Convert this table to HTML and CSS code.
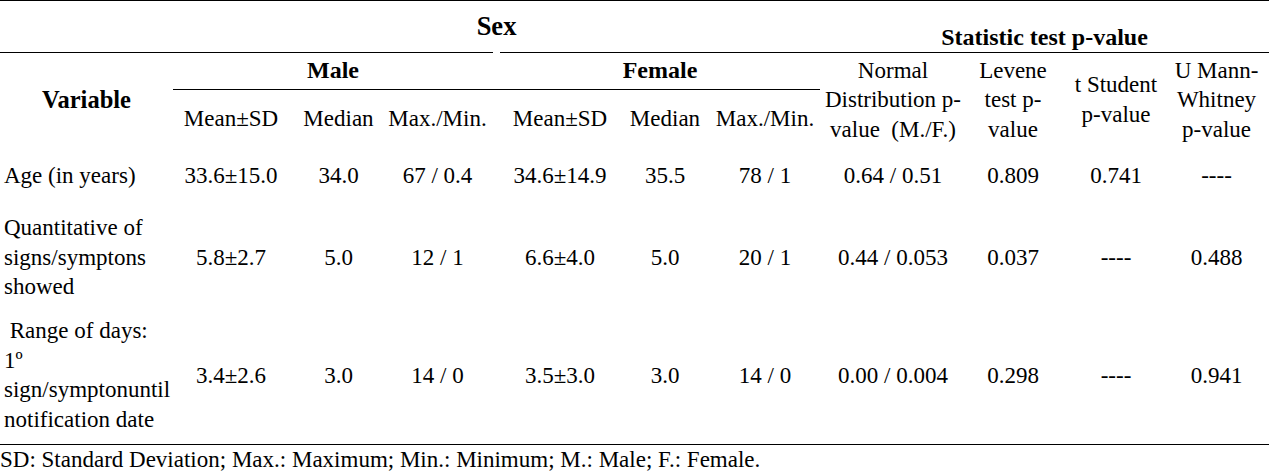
FILE: index.html
```html
<!DOCTYPE html>
<html lang="en">
<head>
<meta charset="utf-8">
<title>Sex statistics table</title>
<link rel="stylesheet" href="styles.css">
</head>
<body>
<table class="stats">
  <colgroup>
    <col class="c-var">
    <col class="c-m1"><col class="c-m2"><col class="c-m3">
    <col class="c-gap">
    <col class="c-f1"><col class="c-f2"><col class="c-f3">
    <col class="c-norm"><col class="c-lev"><col class="c-ts"><col class="c-um">
  </colgroup>
  <thead>
    <tr class="row-a">
      <th colspan="8" class="sex">Sex</th>
      <th colspan="4" class="stat">Statistic test p-value</th>
    </tr>
    <tr class="row-b">
      <th rowspan="2" class="variable">Variable</th>
      <th colspan="3" class="group ruled">Male</th>
      <th class="ruled"></th>
      <th colspan="3" class="group ruled">Female</th>
      <th rowspan="2" class="test">Normal<br>Distribution p-<br>value&nbsp;&nbsp;(M./F.)</th>
      <th rowspan="2" class="test">Levene<br>test p-<br>value</th>
      <th rowspan="2" class="test">t Student<br>p-value</th>
      <th rowspan="2" class="test um">U Mann-<br>Whitney<br>p-value</th>
    </tr>
    <tr class="row-c">
      <th class="sub">Mean±SD</th>
      <th class="sub">Median</th>
      <th class="sub mm">Max./Min.</th>
      <th></th>
      <th class="sub">Mean±SD</th>
      <th class="sub">Median</th>
      <th class="sub">Max./Min.</th>
    </tr>
  </thead>
  <tbody>
    <tr class="row-1">
      <td class="label">Age (in years)</td>
      <td>33.6±15.0</td><td>34.0</td><td class="mm">67 / 0.4</td>
      <td></td>
      <td>34.6±14.9</td><td>35.5</td><td>78 / 1</td>
      <td>0.64 / 0.51</td><td>0.809</td><td>0.741</td><td class="um">----</td>
    </tr>
    <tr class="row-2">
      <td class="label">Quantitative of<br>signs/symptons<br>showed</td>
      <td>5.8±2.7</td><td>5.0</td><td class="mm">12 / 1</td>
      <td></td>
      <td>6.6±4.0</td><td>5.0</td><td>20 / 1</td>
      <td>0.44 / 0.053</td><td>0.037</td><td>----</td><td class="um">0.488</td>
    </tr>
    <tr class="row-3">
      <td class="label">&nbsp;Range of days:<br>1º<br>sign/symptonuntil<br>notification date</td>
      <td>3.4±2.6</td><td>3.0</td><td class="mm">14 / 0</td>
      <td></td>
      <td>3.5±3.0</td><td>3.0</td><td>14 / 0</td>
      <td>0.00 / 0.004</td><td>0.298</td><td>----</td><td class="um">0.941</td>
    </tr>
  </tbody>
</table>
<p class="note">SD: Standard Deviation; Max.: Maximum; Min.: Minimum; M.: Male; F.: Female.</p>
</body>
</html>
```

FILE: styles.css
```css
html, body {
  margin: 0;
  padding: 0;
  background: #fff;
  color: #000;
}

.stats,
.note {
  font-family: "Liberation Serif", "DejaVu Serif", serif;
}

.stats {
  width: 1269px;
  border-collapse: collapse;
  table-layout: fixed;
  border-top: 1px solid #000;
  border-bottom: 1px solid #000;
  font-size: 23px;
  line-height: 29.5px;
}

.c-var { width: 173px; }
.c-m1 { width: 116px; }
.c-m2 { width: 99px; }
.c-m3 { width: 105px; }
.c-gap { width: 7px; }
.c-f1 { width: 120px; }
.c-f2 { width: 90px; }
.c-f3 { width: 110px; }
.c-norm { width: 146px; }
.c-lev { width: 94px; }
.c-ts { width: 112px; }
.c-um { width: 97px; }

.stats th,
.stats td {
  padding: 0;
  text-align: center;
  vertical-align: middle;
  white-space: nowrap;
  font-weight: normal;
}

.row-a { height: 52px; }
.row-b { height: 37px; }
.row-c { height: 57px; }
.row-1 { height: 58px; }
.row-2 { height: 106px; }
.row-3 { height: 134px; }
.row-3 td { padding-bottom: 4px; }

.stats .sex {
  font-weight: bold;
  font-size: 26.5px;
  padding-left: 173px;
  background: linear-gradient(to right, #000 0 493px, transparent 493px 500px, #000 500px) no-repeat left bottom / 100% 1px;
}

.stats .stat {
  font-weight: bold;
  font-size: 24px;
  line-height: 29px;
  vertical-align: bottom;
  border-bottom: 1px solid #000;
}

.stats .group,
.stats .variable {
  font-weight: bold;
  font-size: 24px;
}

.stats .ruled {
  border-bottom: 1px solid #000;
}

.stats .variable {
  font-size: 24.5px;
}

.stats .mm { padding-right: 6px; }
.stats .um { padding-right: 8px; }

.stats .label {
  text-align: left;
  padding-left: 4px;
}

.note {
  margin: 0;
  font-size: 23px;
  line-height: 29.5px;
  white-space: nowrap;
}
```
